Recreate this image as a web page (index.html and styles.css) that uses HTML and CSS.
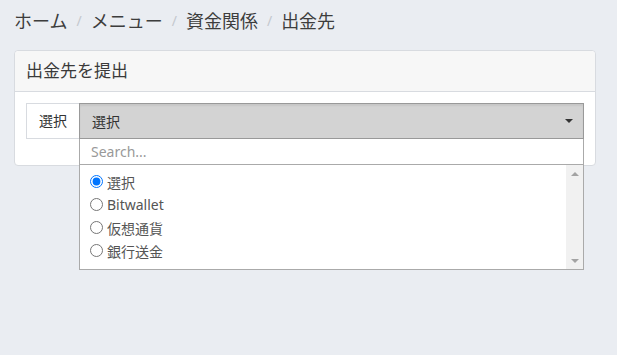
FILE: index.html
```html
<!DOCTYPE html>
<html lang="ja">
    <head>
        <meta charset="UTF-8">
        <meta name="viewport" content="width=device-width, initial-scale=1.0">
        <title>出金先</title>
        <link rel="stylesheet" href="styles.css">
    </head>
    <body>
        <nav class="crumbs">
            <span class="crumb">ホーム</span>
            <span class="sep">/</span>
            <span class="crumb">メニュー</span>
            <span class="sep">/</span>
            <span class="crumb">資金関係</span>
            <span class="sep">/</span>
            <span class="crumb">出金先</span>
        </nav>

        <div class="card">
            <div class="card-head">出金先を提出</div>
            <div class="card-body">
                <div class="field">
                    <div class="field-label">選択</div>
                    <div class="picker">
                        <div class="picker-box">
                            <span>選択</span>
                            <span class="caret"></span>
                        </div>
                        <div class="drop">
                            <div class="drop-search">Search...</div>
                            <div class="drop-main">
                                <ul class="drop-list">
                                    <li><input type="radio" name="dest" checked>選択</li>
                                    <li><input type="radio" name="dest">Bitwallet</li>
                                    <li><input type="radio" name="dest">仮想通貨</li>
                                    <li><input type="radio" name="dest">銀行送金</li>
                                </ul>
                                <div class="bar">
                                    <span class="bar-up"></span>
                                    <span class="bar-down"></span>
                                </div>
                            </div>
                        </div>
                    </div>
                </div>
            </div>
        </div>
    </body>
</html>
```

FILE: styles.css
```css
html {
    height: 100%;
}
body {
    margin: 0;
    min-height: 100%;
    box-sizing: border-box;
    padding: 8px 21px 0 14px;
    background: #eaedf2;
    color: #333;
    font-family: "Noto Sans", "Noto Sans CJK JP", sans-serif;
}

.crumbs {
    display: flex;
    align-items: center;
    height: 24px;
    font-size: 18px;
    color: #3d3d3d;
}
.sep {
    margin: 0 9px;
    color: #c4c8ce;
    font-size: 14px;
}

.card {
    margin-top: 18px;
    background: #fff;
    border: 1px solid #d8dbe0;
    border-radius: 4px;
}
.card-head {
    height: 40px;
    line-height: 40px;
    padding: 0 11px;
    background: #f7f7f7;
    border-bottom: 1px solid #d8dbe0;
    border-radius: 4px 4px 0 0;
    font-size: 17px;
    color: #3a3a3a;
}
.card-body {
    padding: 11px 11px 26px;
}

.field {
    display: flex;
    height: 36px;
}
.field-label {
    width: 52px;
    border: 1px solid #d8dbe0;
    border-right: none;
    font-size: 14px;
    line-height: 34px;
    text-align: center;
}
.picker {
    position: relative;
    flex: 1;
}
.picker-box {
    height: 34px;
    display: flex;
    align-items: center;
    justify-content: space-between;
    padding: 0 10px 0 12px;
    background: #d3d3d3;
    border: 1px solid #999;
    box-shadow: inset 0 2px 2px rgba(0, 0, 0, 0.06);
    font-size: 14px;
}
.caret {
    border-left: 4px solid transparent;
    border-right: 4px solid transparent;
    border-top: 4px solid #333;
}

/* 開いているドロップダウン */
.drop {
    position: absolute;
    top: 36px;
    left: 0;
    width: 100%;
    box-sizing: border-box;
    z-index: 2;
    background: #fff;
    border: 1px solid #aaa;
    border-top: none;
}
.drop-search {
    height: 25px;
    line-height: 25px;
    padding-left: 11px;
    border-bottom: 1px solid #aaa;
    font-size: 14px;
    color: #999;
}
.drop-main {
    display: flex;
    height: 104px;
}
.drop-list {
    flex: 1;
    list-style: none;
    margin: 0;
    padding: 5px 0 0 5px;
    font-size: 14px;
    color: #555;
}
.drop-list li {
    height: 23px;
    display: flex;
    align-items: center;
}
.drop-list input {
    margin: 0 4px 0 5px;
    width: 13px;
    height: 13px;
}
.bar {
    width: 17px;
    background: #f1f1f1;
    display: flex;
    flex-direction: column;
    justify-content: space-between;
    align-items: center;
    padding: 7px 0 6px;
    box-sizing: border-box;
}
.bar-up {
    border-left: 4px solid transparent;
    border-right: 4px solid transparent;
    border-bottom: 4px solid #a3a3a3;
}
.bar-down {
    border-left: 4px solid transparent;
    border-right: 4px solid transparent;
    border-top: 4px solid #a3a3a3;
}
```
